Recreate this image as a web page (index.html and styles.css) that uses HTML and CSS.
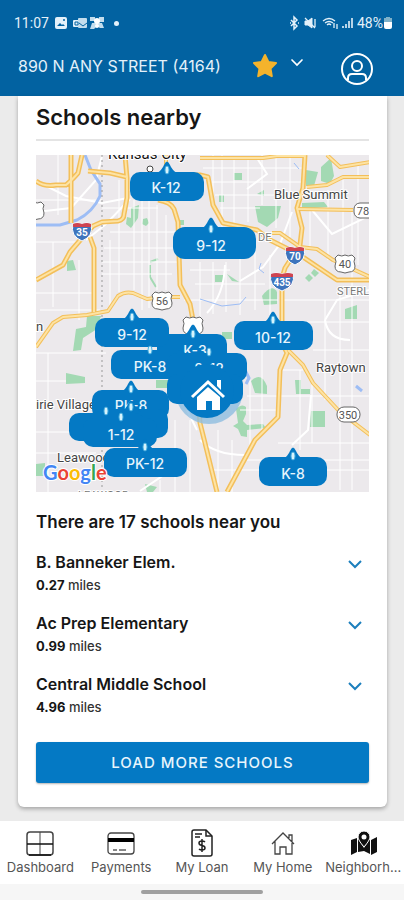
FILE: index.html
```html
<!DOCTYPE html>
<html lang="en">

<head>
    <meta charset="UTF-8" />
    <meta name="viewport" content="width=device-width, initial-scale=1.0" />
    <link rel="stylesheet" href="styles.css">
    <title>Neighborhood</title>
</head>

<body>

    <!-- HEADER -->
    <header class="header">
        <div class="status-bar">
            <span>11:07</span>
            <svg class="status-left" width="60" height="16" viewBox="0 0 60 16">
                <rect x="1" y="2" width="12" height="12" rx="2" fill="#e4f1fa" />
                <path d="M3 11l3-3 2 2 1-1 2 2z" fill="#0262a1" />
                <circle cx="10" cy="5" r="1" fill="#0262a1" />
                <rect x="19" y="5" width="7" height="7" rx="1" fill="#e4f1fa" />
                <rect x="24" y="3" width="9" height="10" rx="1" fill="#c3dded" />
                <path d="M21 7h3v3h-3zM25 8l4 3 4-3" fill="none" stroke="#0262a1" />
                <path d="M36 2h5v4h-5zM45 2h5v5h-5zM38 8h10l2 5h-4l-3-2-3 3h-4z" fill="#c3dded" />
                <circle cx="43" cy="6" r="3" fill="#fff" />
                <circle cx="43" cy="11" r="2" fill="#fff" />
            </svg>
            <span class="dot"></span>
            <svg class="status-right" width="66" height="16" viewBox="0 0 66 16" fill="none" stroke="#e4f1fa">
                <path d="M1 5l6 6-3 3V2l3 3-6 6" stroke-width="1.5" />
                <path d="M0 8h1M8 8h1" stroke-width="1.5" />
                <path d="M15 6h3l4-3v10l-4-3h-3z" fill="#e4f1fa" />
                <path d="M15 3l10 10M25 4v8" stroke-width="1.3" />
                <path d="M33 6q6-5 12 0M35 8q4-3 8 0M37 10q2-2 4 0" stroke-width="1.3" />
                <path d="M44 8v5M47 9v5" stroke-width="1.3" />
                <path d="M53 13v-2M56 13V9M59 13V6M62 13V3" stroke-width="2" opacity=".8" />
            </svg>
            <span class="percent">48%</span>
            <svg width="8" height="12" viewBox="0 0 8 12">
                <path d="M2 0h4v1h2v4H0V1h2z" fill="#7fb1c9" />
                <path d="M0 5h8v5q0 2-2 2H2q-2 0-2-2z" fill="#fff" />
            </svg>
        </div>
        <div class="address-bar">
            <h1>890 N ANY STREET (4164)</h1>
            <button class="icon-btn star" aria-label="Favorite">
                <svg width="28" height="28" viewBox="0 0 28 28">
                    <path d="M14 3l3.4 7 7.6 1-5.500 5.500 1.300 7.700-6.800-3.600-6.800 3.600 1.300-7.700L3 11l7.600-1z"
                        fill="#f4b32c" stroke="#f4b32c" stroke-width="2" stroke-linejoin="round" />
                </svg>
            </button>
            <button class="icon-btn arrow" aria-label="Choose property">
                <svg width="14" height="10" viewBox="0 0 14 10">
                    <path d="M2 2l5 5 5-5" fill="none" stroke="#fff" stroke-width="1.700" stroke-linecap="round" />
                </svg>
            </button>
            <button class="icon-btn profile" aria-label="Profile">
                <svg width="34" height="34" viewBox="0 0 34 34" fill="none" stroke="#fff" stroke-width="2">
                    <circle cx="17" cy="17" r="15" />
                    <circle cx="17" cy="14" r="5" />
                    <path d="M8 28v-2q0-4 4-4h10q4 0 4 4v2" />
                </svg>
            </button>
        </div>
    </header>

    <!-- SCHOOLS CARD -->
    <main class="content">
        <section class="card">
            <h2>Schools nearby</h2>

            <svg class="map" viewBox="36 155 333 337" role="img" aria-label="Map of schools nearby">
                <defs>
                    <g id="interstate">
                        <path d="M-9-7Q-5-9 0-7Q5-9 9-7Q12 5 0 10Q-12 5-9-7z" fill="#3d74bd" stroke="#fff" />
                        <path d="M-9-7Q-5-9 0-7Q5-9 9-7V-4H-9z" fill="#cf4450" />
                    </g>
                    <g id="interstate-wide">
                        <path d="M-11-7Q-6-9 0-7Q6-9 11-7Q14 5 0 10Q-14 5-11-7z" fill="#3d74bd" stroke="#fff" />
                        <path d="M-11-7Q-6-9 0-7Q6-9 11-7V-4H-11z" fill="#cf4450" />
                    </g>
                    <g id="us-route">
                        <path d="M-7-9Q-3-7 0-9Q3-7 7-9L10-6Q8-3 10 2Q10 8 4 8L0 9L-4 8Q-10 8-10 2Q-8-3-10-6z" fill="#fff"
                            stroke="#666" />
                    </g>
                    <ellipse id="drop" rx="2" ry="4" fill="#d6f3fc" stroke="#4db0e0" />
                    <path id="tip" d="M-10 12Q-5 9-3 4Q0-3 3 4Q5 9 10 12z" />
                    <path id="highways"
                        d="M71 155v68M36 181q8 6 20 4h10q5-4 12-12l4-18M36 280l27-15 7-13 12-14 11-12 9-4 16-1q6-1 6-7l3-16v-20l-2-23M88 171l22 2 17 4M90 237l4 11v64M158 200q13 2 16 9l4 13 2 63 10 19 3 16 7 103 5 20 12 49M305 155l-2 33-6 20 5 20-2 17-15 23-3 10v65l5 10-7 17-2 47-23 23-28 52M156 175l44 0 8 2 5 28 10 18 34 7 13 10 30 15 37 25h33" />
                    <path id="highways-small"
                        d="M36 347l17-24 10-6 24-2 21-4 10-15q7-5 15-3l14 6 16-2h17M200 158h63l14-2 28 0M327 155l13 12 30-5M307 187l20-2 16-8h27M297 209l56 1M272 233h8l20 14 17 2 16 11 37 17M288 350l15 15 10 18 27 29 30 23M166 155v20" />
                </defs>

                <rect x="36" y="155" width="333" height="337" fill="#ece9ec" />

                <!-- parks -->
                <g fill="#a3d9b3">
                    <path d="M131 208l8-3-1 13-7 10-5-4 1-7 4 1z" />
                    <path d="M143 219l4-1 2 5-3 3-4-2z" />
                    <path d="M67 261l6-1 3 10-9 1z" />
                    <path d="M180 220h4v5h-4zM234 173h8v7h-8zM219 195h5v7h-5zM257 194l7-4v6z" />
                    <path d="M255 206h26l-3 12-11 9-9-5z" />
                    <path d="M306 170l12 2-4 14h-8zM321 167l10-9 3 18-4 8-9-3z" />
                    <path d="M302 203l22-1 4 5-26 2z" />
                    <path d="M215 275h8v7h-8zM227 274l12 8-7-1zM305 278l4-4 4 4-4 4zM311 273l3-4 5 4-4 4z" />
                    <path d="M262 296q10-13 15-4v12l-13 1z" />
                    <path d="M345 309l12-4v14h-12z" />
                    <path d="M87 316h14l-4 13-14 9-2 12-8 1 3-22 10-2z" />
                    <path d="M66 373l19 4v6l-19 1z" />
                    <path d="M156 380h12v8h-12zM222 332h10v7h-10z" />
                    <path d="M251 381q10-10 16 5v8l-12-1z" />
                    <path d="M295 380h6v9h9v5h-14zM311 411h14v16h-15z" />
                    <path d="M236 409q6-6 10-2v7l-3 7 4 4 16-1 3 4-19 2v7l-6-1-3-7-5-3 5-3z" />
                    <path d="M36 464l9-1v13h-9zM145 484l12 3-4 5h-6z" />
                </g>
                <path d="M150 262l8-3M150 265v12l6 10" fill="none" stroke="#a3d9b3" stroke-width="2" />

                <!-- side streets -->
                <g fill="none" stroke="#fff" stroke-width="1">
                    <path
                        d="M36 200h66M36 242h43M36 293h60M40 310h60M36 353h70M36 381h30M36 432h33M36 453h60M48 353v139M58 155v60M53 242v65M79 260v60M110 240v70M119 180v112M134 200v90M142 195v115M149 188v120M157 205v85M166 215v75M102 262h78M102 274h70M102 208h56M110 232h66M104 248h70M128 190h30" />
                    <path
                        d="M213 155v48M222 155v80M234 158v70M248 158v64M262 155v50M276 158v70M290 157v80M203 168h100M212 182h90M215 195h84M220 208h40M190 270h40M195 284h70M184 300h94M200 262v58M213 262v52M226 262v50M240 255v60M255 250v60M270 255v60" />
                    <path
                        d="M283 300h86M283 322h86M313 350h56M283 370h20M247 396h122M240 410h40M278 443h91M247 460h122M210 470h159M325 300v100M340 290v200M352 210v280M312 383v60M300 370v80M262 330v100M250 380v70M218 430v60M232 440v52M190 420v72M175 420v72M160 480v12M310 210v40M328 190v70M343 180v90M358 165v100" />
                </g>
                <g fill="none" stroke="#fff" stroke-width="2">
                    <path d="M36 181l30 15 36 7 26-5M86 240l20-16 24-25M36 212l35-4 25-28 6-24" />
                    <path d="M257 158l10 16-20 15M292 212l-12 32-17 23-23 14M312 210l20 24 37-18M325 320l12-20 32-10" />
                    <path d="M225 265q-1 30-18 48M325 320q3 20 25 20M311 395l-3 35-16 15M200 440q15 15 45 15M140 491l30-20 15-5M187 410l10 20" />
                </g>

                <!-- water -->
                <g fill="none" stroke="#9dbdf5" stroke-width="1">
                    <path d="M85 155l6 15 9 14v12q-7 16-23 24l-17 5-24 0" stroke-width="3" />
                    <path d="M200 299l22 7 18-2 6-7M261 263l-2 6 5 4M294 163l5 6" />
                    <path d="M245 370l4 8-3 6M356 386l6 5" stroke-width="3" />
                </g>
                <path d="M102 155v337" stroke="#999" stroke-dasharray="2 3" />

                <!-- highways: dark edge first, light centre on top -->
                <g fill="none" stroke="#f3bf5a" stroke-linejoin="round">
                    <use href="#highways" stroke-width="5" />
                    <use href="#highways-small" stroke-width="4" />
                </g>
                <g fill="none" stroke="#fde3a4" stroke-width="2" stroke-linejoin="round">
                    <use href="#highways" />
                    <use href="#highways-small" />
                </g>

                <!-- road signs -->
                <use href="#interstate" x="82" y="231" />
                <use href="#interstate" x="295" y="255" />
                <use href="#interstate-wide" x="282" y="281" />
                <g class="sign-light">
                    <text x="82" y="236">35</text>
                    <text x="295" y="260">70</text>
                    <text x="282" y="286">435</text>
                </g>
                <use href="#us-route" x="162" y="301" />
                <use href="#us-route" x="345" y="264" />
                <use href="#us-route" x="193" y="326" />
                <use href="#us-route" x="34" y="211" />
                <rect x="354" y="203" width="22" height="15" rx="6" fill="#fff" stroke="#666" />
                <rect x="337" y="407" width="23" height="15" rx="7" fill="#fff" stroke="#666" />
                <g class="sign-dark">
                    <text x="162" y="305">56</text>
                    <text x="345" y="268">40</text>
                    <text x="363" y="215">78</text>
                    <text x="348" y="419">350</text>
                </g>

                <!-- place names -->
                <g class="places">
                    <text x="108" y="159" class="city">Kansas City</text>
                    <text x="274" y="199">Blue Summit</text>
                    <text x="316" y="372">Raytown</text>
                    <text x="36" y="409">irie Village</text>
                    <text x="57" y="462">Leawood</text>
                    <text x="36" y="331">n</text>
                    <text x="258" y="241" class="district">DE</text>
                    <text x="337" y="295" class="district">STERLING</text>
                    <text x="78" y="499" class="district">LEAWOOD</text>
                </g>
                <circle cx="150" cy="169" r="3" fill="#fff" stroke="#444" />

                <!-- home halo -->
                <circle cx="209" cy="390" r="34" fill="#8fbde0" opacity=".8" />

                <!-- school pins -->
                <g class="pins">
                    <g>
                        <use href="#tip" x="167" y="161" />
                        <rect x="130" y="172" width="74" height="29" rx="10" />
                        <use href="#drop" x="167" y="170" />
                        <text x="166" y="193">K-12</text>
                    </g>
                    <g>
                        <use href="#tip" x="211" y="217" />
                        <rect x="173" y="227" width="83" height="32" rx="12" />
                        <use href="#drop" x="211" y="229" />
                        <text x="211" y="251">9-12</text>
                    </g>
                    <g>
                        <use href="#tip" x="193" y="324" />
                        <rect x="157" y="334" width="70" height="30" rx="10" />
                        <use href="#drop" x="193" y="334" />
                        <text x="195" y="356">K-3</text>
                    </g>
                    <g>
                        <use href="#tip" x="132" y="308" />
                        <rect x="95" y="318" width="74" height="29" rx="10" />
                        <use href="#drop" x="132" y="317" />
                        <text x="132" y="340">9-12</text>
                    </g>
                    <g>
                        <rect x="111" y="350" width="77" height="29" rx="10" />
                        <use href="#drop" x="150" y="350" />
                        <text x="150" y="372">PK-8</text>
                    </g>
                    <g>
                        <rect x="167" y="353" width="80" height="29" rx="10" />
                        <rect x="167" y="374" width="76" height="30" rx="10" />
                        <text x="209" y="374">8-12</text>
                        <use href="#drop" x="209" y="352" />
                    </g>
                    <g>
                        <use href="#tip" x="273" y="311" />
                        <rect x="234" y="321" width="79" height="29" rx="10" />
                        <use href="#drop" x="273" y="320" />
                        <text x="273" y="343">10-12</text>
                    </g>
                    <g>
                        <use href="#tip" x="131" y="380" />
                        <rect x="92" y="390" width="77" height="29" rx="10" />
                        <use href="#drop" x="131" y="389" />
                        <text x="131" y="411">PK-8</text>
                    </g>
                    <g>
                        <rect x="94" y="409" width="74" height="29" rx="10" />
                        <rect x="69" y="413" width="76" height="28" rx="10" />
                        <rect x="83" y="418" width="74" height="29" rx="10" />
                        <use href="#tip" x="131" y="400" />
                        <use href="#drop" x="106" y="411" />
                        <use href="#drop" x="121" y="417" />
                        <use href="#drop" x="131" y="407" />
                        <text x="121" y="440">1-12</text>
                    </g>
                    <g>
                        <use href="#tip" x="145" y="438" />
                        <rect x="104" y="448" width="83" height="29" rx="10" />
                        <use href="#drop" x="145" y="447" />
                        <text x="145" y="469">PK-12</text>
                    </g>
                    <g>
                        <use href="#tip" x="293" y="447" />
                        <rect x="259" y="457" width="68" height="29" rx="10" />
                        <use href="#drop" x="293" y="456" />
                        <text x="293" y="479">K-8</text>
                    </g>
                </g>

                <!-- home -->
                <circle cx="207" cy="391" r="27" fill="#0479c4" />
                <path d="M197 397l11-10 12 10v13h-8v-9h-6v9h-9z" fill="#fff" />
                <path d="M192 397l16-15 16 15" fill="none" stroke="#fff" stroke-width="3" />
                <path d="M217 380h4v10l-4-4z" fill="#fff" />

                <text class="google" x="43" y="480"><tspan fill="#4285f4">G</tspan><tspan fill="#ea4335">o</tspan><tspan
                        fill="#fbbc05">o</tspan><tspan fill="#4285f4">g</tspan><tspan fill="#34a853">l</tspan><tspan
                        fill="#ea4335">e</tspan></text>
            </svg>

            <h3>There are 17 schools near you</h3>

            <ul class="schools">
                <li>
                    <div>
                        <h4>B. Banneker Elem.</h4>
                        <p><b>0.27</b> miles</p>
                    </div>
                    <button class="icon-btn expand" aria-label="Show B. Banneker Elem.">
                        <svg width="16" height="10" viewBox="0 0 16 10">
                            <path d="M2 1l6 6 6-6" />
                        </svg>
                    </button>
                </li>
                <li>
                    <div>
                        <h4>Ac Prep Elementary</h4>
                        <p><b>0.99</b> miles</p>
                    </div>
                    <button class="icon-btn expand" aria-label="Show Ac Prep Elementary">
                        <svg width="16" height="10" viewBox="0 0 16 10">
                            <path d="M2 1l6 6 6-6" />
                        </svg>
                    </button>
                </li>
                <li>
                    <div>
                        <h4>Central Middle School</h4>
                        <p><b>4.96</b> miles</p>
                    </div>
                    <button class="icon-btn expand" aria-label="Show Central Middle School">
                        <svg width="16" height="10" viewBox="0 0 16 10">
                            <path d="M2 1l6 6 6-6" />
                        </svg>
                    </button>
                </li>
            </ul>

            <button class="btn">LOAD MORE SCHOOLS</button>
        </section>
    </main>

    <!-- BOTTOM TABS -->
    <nav class="tabs">
        <a href="#">
            <svg width="28" height="28" viewBox="0 0 28 28" fill="none" stroke="#444">
                <rect x="1" y="3" width="26" height="23" rx="3" stroke-width="1.500" />
                <path d="M14 3v23" />
                <path d="M1 15h26M3 26h22" stroke="#111" stroke-width="1.500" />
            </svg>
            <span>Dashboard</span>
        </a>
        <a href="#">
            <svg width="28" height="28" viewBox="0 0 28 28" fill="none" stroke="#444">
                <rect x="1" y="4" width="26" height="21" rx="3" stroke-width="1.300" />
                <path d="M1 11h26" stroke="#000" stroke-width="4" />
                <path d="M6 21h4M12 21h7" stroke="#111" />
            </svg>
            <span>Payments</span>
        </a>
        <a href="#">
            <svg width="28" height="28" viewBox="0 0 28 28" fill="none" stroke="#222" stroke-width="1.500">
                <path d="M6 1h12l6 6v18q0 2-2 2H6q-2 0-2-2V3q0-2 2-2z" />
                <path d="M18 1v6h6M7 5h7M7 8h5" />
                <path d="M17 13q-1-1-3-1-3 0-3 2t3 2.500 3 2.500-3 2q-2 0-3-1M14 10v13" />
            </svg>
            <span>My Loan</span>
        </a>
        <a href="#">
            <svg width="28" height="28" viewBox="0 0 28 28" fill="none" stroke="#444" stroke-width="1.300">
                <path d="M3 15L14 4l11 11M6 12v13h5v-7h6v7h6V12M20 9V6h3v6" />
            </svg>
            <span>My Home</span>
        </a>
        <a href="#">
            <svg width="28" height="28" viewBox="0 0 28 28" fill="#111">
                <path d="M1 11l6-2v14l-6 3zM21 11l6-3v15l-6 3zM8 10l2 0q1 5 4 9 3-4 4-9l2 1v14l-6-3-6 1z" />
                <path d="M14 2a6 6 0 0 1 6 6q0 3-6 10-6-7-6-10a6 6 0 0 1 6-6z" stroke="#fff" />
                <circle cx="14" cy="8" r="2.500" fill="#fff" />
            </svg>
            <span>Neighborhood</span>
        </a>
    </nav>
    <div class="gesture-bar"><span></span></div>

</body>

</html>
```
FILE: styles.css
```css
:root {
    --header: #0262a1;
    --blue: #0479c4;
    --page: #ebebeb;
}

* {
    box-sizing: border-box;
}

body {
    background-color: var(--page);
    font-family: Inter, 'Open Sans', sans-serif;
    color: #161616;
    display: flex;
    flex-direction: column;
    min-height: 100vh;
    margin: 0;
}

h1,
h2,
h3,
h4,
p,
ul {
    margin: 0;
    padding: 0;
}

svg {
    display: block;
}

.header {
    background-color: var(--header);
    color: #e4f1fa;
    height: 96px;
}

.status-bar {
    display: flex;
    align-items: center;
    font-family: Roboto, sans-serif;
    font-size: 14px;
    height: 46px;
    padding: 0 12px 0 14px;
}

.status-left {
    margin-left: 5px;
}

.dot {
    background-color: #e4f1fa;
    border-radius: 50%;
    height: 5px;
    width: 5px;
}

.status-right {
    margin-left: auto;
}

.percent {
    margin: 0 1px;
}

.address-bar {
    display: flex;
    align-items: center;
    height: 40px;
    padding: 0 30px 0 18px;
}

.address-bar h1 {
    flex: 1;
    font-size: 16px;
    font-weight: 400;
    white-space: nowrap;
}

.icon-btn {
    background: none;
    border: 0;
    cursor: pointer;
    padding: 0;
}

.star {
    margin-right: 11px;
}

.arrow {
    margin-bottom: 6px;
}

.profile {
    margin: 6px 0 0 36px;
}

.content {
    flex: 1;
    padding: 0 17px 14px 18px;
}

.card {
    background-color: white;
    border-radius: 0 0 6px 6px;
    box-shadow: 0 2px 4px rgba(0, 0, 0, 0.3);
    padding: 6px 18px 24px;
}

.card h2 {
    border-bottom: 2px solid #e4e4e4;
    font-size: 22px;
    font-weight: 600;
    line-height: 30px;
    padding-bottom: 7px;
    margin-bottom: 14px;
}

.map {
    width: 100%;
    height: auto;
    overflow: hidden;
}

.map text {
    font-family: Roboto, sans-serif;
}

.sign-light {
    fill: white;
    font-size: 10px;
    font-weight: 700;
    text-anchor: middle;
}

.sign-dark {
    fill: #555;
    font-size: 11px;
    text-anchor: middle;
}

.places {
    fill: #444;
    font-size: 13px;
    stroke: white;
    stroke-width: 2px;
    paint-order: stroke;
}

.places .city {
    fill: #111;
    font-size: 15px;
}

.places .district {
    fill: #777;
    font-size: 11px;
}

.pins {
    fill: var(--blue);
}

.pins text {
    fill: #e8f5fc;
    font-family: Inter, sans-serif;
    font-size: 14px;
    font-weight: 500;
    text-anchor: middle;
}

.map .google {
    font-family: Lato, sans-serif;
    font-size: 20px;
    font-weight: 700;
    stroke: white;
    stroke-width: 2px;
    paint-order: stroke;
}

.card h3 {
    font-size: 17px;
    font-weight: 600;
    line-height: 20px;
    margin: 20px 0;
}

.schools {
    list-style: none;
}

.schools li {
    display: flex;
    justify-content: space-between;
    align-items: flex-start;
    margin-bottom: 20px;
}

.schools h4 {
    font-size: 16px;
    font-weight: 600;
    line-height: 20px;
}

.schools p {
    font-size: 13px;
    font-weight: 500;
    line-height: 16px;
    margin-top: 5px;
    color: #333;
}

.schools b {
    color: #161616;
}

.expand {
    margin: 8px 6px 0 0;
}

.expand path {
    fill: none;
    stroke: #1c7fbd;
    stroke-width: 2px;
}

.btn {
    background-color: var(--blue);
    border: 0;
    border-radius: 3px;
    box-shadow: 0 1px 2px rgba(0, 0, 0, 0.3);
    color: #e8f5fc;
    cursor: pointer;
    font-family: inherit;
    font-size: 15px;
    font-weight: 500;
    letter-spacing: 1px;
    height: 41px;
    margin-top: 7px;
    width: 100%;
}

.tabs {
    background-color: white;
    display: grid;
    grid-template-columns: repeat(5, minmax(0, 1fr));
    height: 63px;
    padding-top: 8px;
}

.tabs a {
    color: #555;
    font-size: 13px;
    line-height: 18px;
    text-align: center;
    text-decoration: none;
}

.tabs svg {
    margin: 0 auto 1px;
}

.tabs span {
    display: block;
    overflow: hidden;
    padding: 0 2px;
    text-overflow: ellipsis;
    white-space: nowrap;
}

.gesture-bar {
    background-color: #f6f6f6;
    height: 16px;
    padding-top: 6px;
}

.gesture-bar span {
    background-color: #a0a0a0;
    border-radius: 3px;
    display: block;
    height: 4px;
    margin: 0 auto;
    width: 30%;
}
```
